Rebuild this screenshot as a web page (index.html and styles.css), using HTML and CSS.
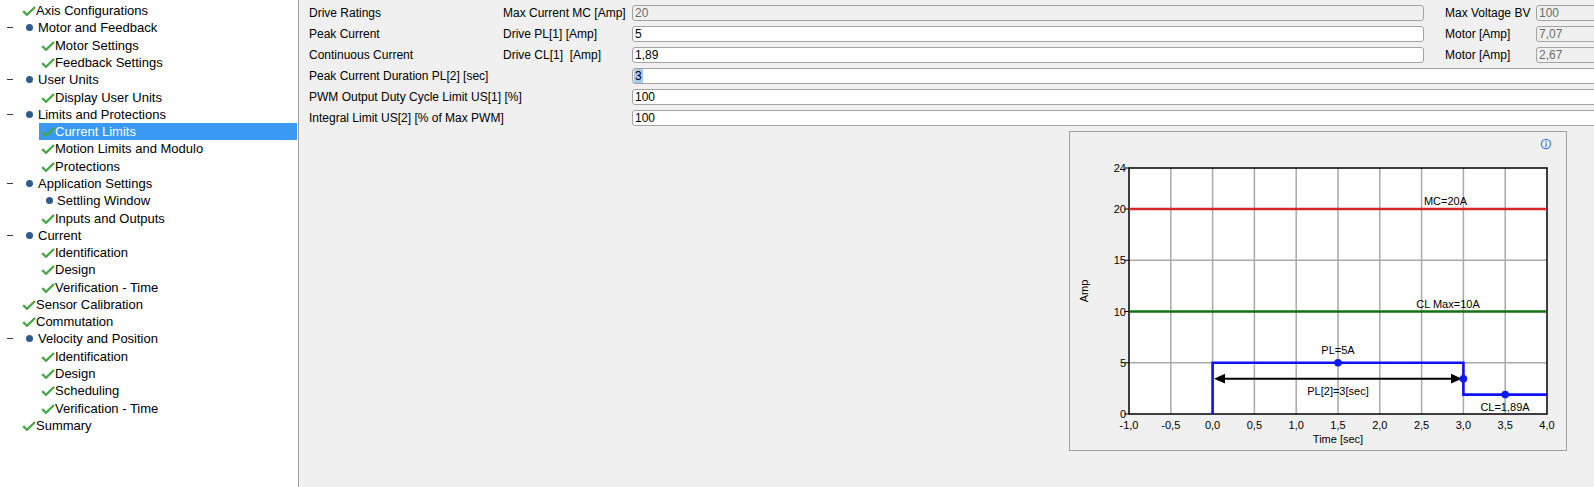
FILE: index.html
```html
<!DOCTYPE html>
<html>
<head>
<meta charset="utf-8">
<link rel="stylesheet" href="styles.css">
</head>
<body>
<div class="app">
  <div class="tree">
    <div class="row l0"><svg class="chk" viewBox="0 0 14 10"><path d="M1.2 5.2 L5 8.8 L13 1"/></svg><span>Axis Configurations</span></div>
    <div class="row l1"><span class="tog"></span><span class="dot"></span><span class="t1">Motor and Feedback</span></div>
    <div class="row l2"><div class="item"><svg class="chk" viewBox="0 0 14 10"><path d="M1.2 5.2 L5 8.8 L13 1"/></svg><span>Motor Settings</span></div></div>
    <div class="row l2"><div class="item"><svg class="chk" viewBox="0 0 14 10"><path d="M1.2 5.2 L5 8.8 L13 1"/></svg><span>Feedback Settings</span></div></div>
    <div class="row l1"><span class="tog"></span><span class="dot"></span><span class="t1">User Units</span></div>
    <div class="row l2"><div class="item"><svg class="chk" viewBox="0 0 14 10"><path d="M1.2 5.2 L5 8.8 L13 1"/></svg><span>Display User Units</span></div></div>
    <div class="row l1"><span class="tog"></span><span class="dot"></span><span class="t1">Limits and Protections</span></div>
    <div class="row l2"><div class="item sel"><svg class="chk" viewBox="0 0 14 10"><path d="M1.2 5.2 L5 8.8 L13 1"/></svg><span>Current Limits</span></div></div>
    <div class="row l2"><div class="item"><svg class="chk" viewBox="0 0 14 10"><path d="M1.2 5.2 L5 8.8 L13 1"/></svg><span>Motion Limits and Modulo</span></div></div>
    <div class="row l2"><div class="item"><svg class="chk" viewBox="0 0 14 10"><path d="M1.2 5.2 L5 8.8 L13 1"/></svg><span>Protections</span></div></div>
    <div class="row l1"><span class="tog"></span><span class="dot"></span><span class="t1">Application Settings</span></div>
    <div class="row l2"><div class="item dotitem"><span class="dot"></span><span class="t2">Settling Window</span></div></div>
    <div class="row l2"><div class="item"><svg class="chk" viewBox="0 0 14 10"><path d="M1.2 5.2 L5 8.8 L13 1"/></svg><span>Inputs and Outputs</span></div></div>
    <div class="row l1"><span class="tog"></span><span class="dot"></span><span class="t1">Current</span></div>
    <div class="row l2"><div class="item"><svg class="chk" viewBox="0 0 14 10"><path d="M1.2 5.2 L5 8.8 L13 1"/></svg><span>Identification</span></div></div>
    <div class="row l2"><div class="item"><svg class="chk" viewBox="0 0 14 10"><path d="M1.2 5.2 L5 8.8 L13 1"/></svg><span>Design</span></div></div>
    <div class="row l2"><div class="item"><svg class="chk" viewBox="0 0 14 10"><path d="M1.2 5.2 L5 8.8 L13 1"/></svg><span>Verification - Time</span></div></div>
    <div class="row l0"><svg class="chk" viewBox="0 0 14 10"><path d="M1.2 5.2 L5 8.8 L13 1"/></svg><span>Sensor Calibration</span></div>
    <div class="row l0"><svg class="chk" viewBox="0 0 14 10"><path d="M1.2 5.2 L5 8.8 L13 1"/></svg><span>Commutation</span></div>
    <div class="row l1"><span class="tog"></span><span class="dot"></span><span class="t1">Velocity and Position</span></div>
    <div class="row l2"><div class="item"><svg class="chk" viewBox="0 0 14 10"><path d="M1.2 5.2 L5 8.8 L13 1"/></svg><span>Identification</span></div></div>
    <div class="row l2"><div class="item"><svg class="chk" viewBox="0 0 14 10"><path d="M1.2 5.2 L5 8.8 L13 1"/></svg><span>Design</span></div></div>
    <div class="row l2"><div class="item"><svg class="chk" viewBox="0 0 14 10"><path d="M1.2 5.2 L5 8.8 L13 1"/></svg><span>Scheduling</span></div></div>
    <div class="row l2"><div class="item"><svg class="chk" viewBox="0 0 14 10"><path d="M1.2 5.2 L5 8.8 L13 1"/></svg><span>Verification - Time</span></div></div>
    <div class="row l0"><svg class="chk" viewBox="0 0 14 10"><path d="M1.2 5.2 L5 8.8 L13 1"/></svg><span>Summary</span></div>
  </div>

  <div class="panel">
    <div class="form">
      <div class="lbl">Drive Ratings</div>
      <div class="lbl">Max Current MC [Amp]</div>
      <div class="field dis">20</div>
      <div></div>
      <div class="lbl">Max Voltage BV</div>
      <div class="field dis">100</div>

      <div class="lbl">Peak Current</div>
      <div class="lbl">Drive PL[1] [Amp]</div>
      <div class="field">5</div>
      <div></div>
      <div class="lbl">Motor [Amp]</div>
      <div class="field dis">7,07</div>

      <div class="lbl">Continuous Current</div>
      <div class="lbl">Drive CL[1]&nbsp; [Amp]</div>
      <div class="field">1,89</div>
      <div></div>
      <div class="lbl">Motor [Amp]</div>
      <div class="field dis">2,67</div>

      <div class="lbl wide">Peak Current Duration PL[2] [sec]</div>
      <div class="field full"><span class="hl">3</span></div>

      <div class="lbl wide">PWM Output Duty Cycle Limit US[1] [%]</div>
      <div class="field full">100</div>

      <div class="lbl wide">Integral Limit US[2] [% of Max PWM]</div>
      <div class="field full">100</div>
    </div>

    <div class="chartwrap">
      <div class="chart">
        <svg class="plot" width="496" height="318" viewBox="1069 132 496 318">
          <g class="info">
            <circle cx="1545" cy="144" r="4.6" fill="none" stroke="#3b7dd8" stroke-width="1.2"/>
            <circle cx="1545" cy="141.8" r="0.8" fill="#3b7dd8"/>
            <line x1="1545" y1="143.3" x2="1545" y2="147" stroke="#3b7dd8" stroke-width="1.3"/>
          </g>
          <rect x="1128" y="168" width="418" height="246" fill="#ffffff"/>
          <g stroke="#a9a9a9" stroke-width="1.5">
            <line x1="1169.8" y1="168" x2="1169.8" y2="414"/>
            <line x1="1211.6" y1="168" x2="1211.6" y2="414"/>
            <line x1="1253.4" y1="168" x2="1253.4" y2="414"/>
            <line x1="1295.2" y1="168" x2="1295.2" y2="414"/>
            <line x1="1337" y1="168" x2="1337" y2="414"/>
            <line x1="1378.8" y1="168" x2="1378.8" y2="414"/>
            <line x1="1420.6" y1="168" x2="1420.6" y2="414"/>
            <line x1="1462.4" y1="168" x2="1462.4" y2="414"/>
            <line x1="1504.2" y1="168" x2="1504.2" y2="414"/>
            <line x1="1128" y1="362.75" x2="1546" y2="362.75"/>
            <line x1="1128" y1="260.25" x2="1546" y2="260.25"/>
          </g>
          <rect x="1128" y="168" width="418" height="246" fill="none" stroke="#000" stroke-width="1.5"/>
          <g stroke="#000" stroke-width="1">
            <line x1="1123.5" y1="168" x2="1128" y2="168"/>
            <line x1="1123.5" y1="209" x2="1128" y2="209"/>
            <line x1="1123.5" y1="260.25" x2="1128" y2="260.25"/>
            <line x1="1123.5" y1="311.5" x2="1128" y2="311.5"/>
            <line x1="1123.5" y1="362.75" x2="1128" y2="362.75"/>
            <line x1="1123.5" y1="414" x2="1128" y2="414"/>
          </g>
          <line x1="1128" y1="209" x2="1546" y2="209" stroke="#d8262a" stroke-width="2.6"/>
          <line x1="1128" y1="311.5" x2="1546" y2="311.5" stroke="#137013" stroke-width="2.6"/>
          <polyline points="1211.6,414 1211.6,362.75 1462.4,362.75 1462.4,394.6 1546,394.6" fill="none" stroke="#1010f5" stroke-width="2.6"/>
          <line x1="1219" y1="378.7" x2="1455" y2="378.7" stroke="#000" stroke-width="2"/>
          <polygon points="1213,378.7 1224,373.8 1224,383.6" fill="#000"/>
          <polygon points="1461,378.7 1450,373.8 1450,383.6" fill="#000"/>
          <g fill="#0a1af5">
            <circle cx="1337" cy="362.75" r="3.8"/>
            <circle cx="1462.4" cy="378.7" r="3.8"/>
            <circle cx="1504.2" cy="394.6" r="3.8"/>
          </g>
          <g class="tx" text-anchor="end">
            <text x="1125" y="172">24</text>
            <text x="1125" y="213">20</text>
            <text x="1125" y="264.25">15</text>
            <text x="1125" y="315.5">10</text>
            <text x="1125" y="366.75">5</text>
            <text x="1125" y="418">0</text>
          </g>
          <g class="tx" text-anchor="middle">
            <text x="1128" y="429">-1,0</text>
            <text x="1169.8" y="429">-0,5</text>
            <text x="1211.6" y="429">0,0</text>
            <text x="1253.4" y="429">0,5</text>
            <text x="1295.2" y="429">1,0</text>
            <text x="1337" y="429">1,5</text>
            <text x="1378.8" y="429">2,0</text>
            <text x="1420.6" y="429">2,5</text>
            <text x="1462.4" y="429">3,0</text>
            <text x="1504.2" y="429">3,5</text>
            <text x="1546" y="429">4,0</text>
            <text x="1337" y="443">Time [sec]</text>
            <text x="1444.5" y="205">MC=20A</text>
            <text x="1447" y="307.5">CL Max=10A</text>
            <text x="1337" y="354">PL=5A</text>
            <text x="1337" y="395">PL[2]=3[sec]</text>
            <text x="1504" y="411">CL=1,89A</text>
            <text x="0" y="0" transform="translate(1087 291) rotate(-90)">Amp</text>
          </g>
        </svg>
      </div>
    </div>
  </div>
</div>
</body>
</html>
```

FILE: styles.css
```css
html, body {
  margin: 0;
  padding: 0;
  height: 100%;
  overflow: hidden;
}
body {
  font-family: "Liberation Sans", Arial, sans-serif;
  color: #000;
  background: #f0f0f0;
}
.app {
  display: flex;
  height: 487px;
  width: 1594px;
}
.tree {
  width: 297px;
  flex: none;
  background: #fff;
  border-right: 1px solid #a0a0a0;
  padding: 2px 1px 0 0;
  box-sizing: content-box;
  font-size: 13px;
}
.row {
  display: flex;
  align-items: center;
  height: 17.29px;
  line-height: 17px;
  white-space: nowrap;
}
.chk {
  width: 14px;
  height: 10px;
  flex: none;
  margin-top: 1px;
}
.chk path {
  fill: none;
  stroke: #45a845;
  stroke-width: 2.3;
}
.l0 {
  padding-left: 22px;
}
.l1 {
  padding-left: 7px;
}
.tog {
  width: 6px;
  height: 1px;
  background: #3a3a3a;
  flex: none;
}
.dot {
  width: 7px;
  height: 7px;
  border-radius: 50%;
  background: #2d5b8c;
  flex: none;
}
.l1 .dot {
  margin-left: 13px;
}
.t1 {
  margin-left: 5px;
}
.l2 {
  padding-left: 39px;
}
.item {
  flex: 1;
  display: flex;
  align-items: center;
  height: 100%;
  padding-left: 2px;
}
.dotitem {
  padding-left: 7px;
}
.t2 {
  margin-left: 4px;
}
.sel {
  background: #3a99f2;
  color: #fff;
}

.panel {
  flex: 1;
  overflow: hidden;
  padding-left: 10px;
  font-size: 12px;
}
.form {
  display: grid;
  grid-template-columns: 194px 129px 792px 21px 91px 90px;
  grid-auto-rows: 16px;
  row-gap: 5px;
  padding-top: 5px;
  width: 1317px;
}
.lbl {
  line-height: 16px;
  white-space: nowrap;
}
.wide {
  grid-column: 1 / 3;
}
.field {
  box-sizing: border-box;
  height: 16px;
  border: 1px solid #a3a3a3;
  border-radius: 3px;
  background: #fff;
  padding-left: 2px;
  line-height: 14px;
  white-space: nowrap;
}
.field.dis {
  background: #f0f0f0;
  color: #6d6d6d;
}
.field.full {
  grid-column: 3 / 7;
}
.hl {
  background: #a6cbef;
  padding: 0 1px;
  margin-left: -1px;
}
.chartwrap {
  display: flex;
  justify-content: flex-end;
  margin-top: 5px;
  width: 1286px;
}
.chart {
  width: 498px;
  height: 320px;
  box-sizing: border-box;
  border: 1px solid #a0a0a0;
  background: #f0f0f0;
  margin-right: 28px;
}
.plot {
  display: block;
}
.tx text {
  font-family: "Liberation Sans", Arial, sans-serif;
  font-size: 11px;
  fill: #000;
}
```
